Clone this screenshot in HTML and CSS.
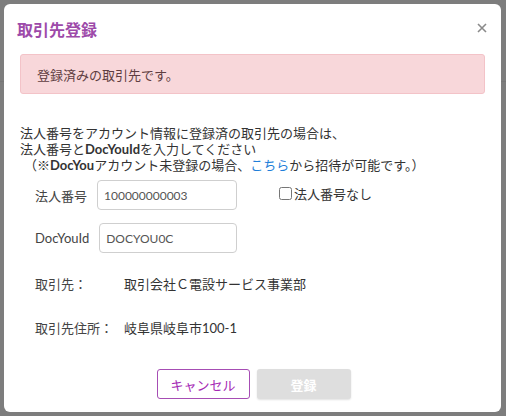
FILE: index.html
```html
<!DOCTYPE html>
<html lang="ja">
<head>
<meta charset="utf-8">
<title>取引先登録</title>
<link rel="stylesheet" href="styles.css">
</head>
<body>
<div class="backdrop-line"></div>
<div class="modal">
  <div class="header">
    <h1 class="title">取引先登録</h1>
    <button class="close" type="button" aria-label="close">
      <svg width="10" height="10" viewBox="0 0 10 10"><path d="M1 1L9 9M9 1L1 9" stroke="#8a8a8a" stroke-width="1.6" fill="none"/></svg>
    </button>
  </div>
  <div class="alert">登録済みの取引先です。</div>
  <p class="intro">法人番号をアカウント情報に登録済の取引先の場合は、<br>法人番号と<b>DocYouId</b>を入力してください<br><span class="paren">（</span>※<b>DocYou</b>アカウント未登録の場合、<a class="link" href="#">こちら</a>から招待が可能です。）</p>
  <div class="form">
    <div class="row">
      <label class="lbl">法人番号</label>
      <input class="field field-wide" type="text" value="100000000003">
      <label class="check"><input class="box" type="checkbox">法人番号なし</label>
    </div>
    <div class="row">
      <label class="lbl">DocYouId</label>
      <input class="field" type="text" value="DOCYOU0C">
    </div>
    <div class="row info first-info"><span class="key">取引先：</span><span class="val">取引会社Ｃ電設サービス事業部</span></div>
    <div class="row info"><span class="key">取引先住所：</span><span class="val">岐阜県岐阜市100-1</span></div>
  </div>
  <div class="actions">
    <button class="btn cancel" type="button">キャンセル</button>
    <button class="btn submit" type="button">登録</button>
  </div>
</div>
</body>
</html>
```
FILE: styles.css
```css
html, body {
  margin: 0;
  padding: 0;
}
body {
  background: #7d7d7d;
  font-family: Lato, "Noto Sans CJK JP", sans-serif;
  color: #333;
  font-size: 13px;
  width: 506px;
  height: 416px;
  overflow: hidden;
  padding: 4px 0 0 4px;
  box-sizing: border-box;
  position: relative;
}
.backdrop-line {
  position: absolute;
  left: 0;
  top: 81px;
  width: 506px;
  height: 1px;
  background: #767676;
}
.modal {
  position: relative;
  width: 497px;
  height: 408px;
  background: #fff;
  border-radius: 6px;
  display: flex;
  flex-direction: column;
  box-sizing: border-box;
}
.header {
  height: 50px;
  padding: 0 13px 0 13px;
  display: flex;
  align-items: center;
  justify-content: space-between;
  box-sizing: border-box;
}
.title {
  margin: 0;
  font-size: 16px;
  font-weight: 700;
  color: #9d4aa9;
  line-height: 20px;
  padding-top: 1px;
}
.close {
  border: 0;
  background: none;
  padding: 0;
  width: 10px;
  height: 10px;
  margin-right: 1px;
  margin-top: -2px;
  display: flex;
}
.alert {
  margin: 0 16px;
  height: 40px;
  box-sizing: border-box;
  background: #f8d7da;
  border: 1px solid #f3c3c8;
  border-radius: 3px;
  padding: 0 16px;
  display: flex;
  align-items: center;
  color: #5e3d41;
  font-size: 13px;
}
.intro {
  margin: 31px 16px 0 16px;
  line-height: 16px;
  font-size: 13px;
  color: #333;
}
.intro b {
  font-weight: 700;
}
.paren {
  padding-left: 4px;
}
.link {
  color: #1f7fd9;
  text-decoration: none;
}
.form {
  margin: 7px 0 0 31px;
  display: flex;
  flex-direction: column;
}
.row {
  display: flex;
  align-items: center;
  height: 30px;
}
.row + .row {
  margin-top: 13px;
}
.row.first-info {
  margin-top: 15px;
}
.row.info + .row.info {
  margin-top: 14px;
}
.lbl {
  margin-right: 10px;
  color: #444;
}
.field {
  width: 138px;
  height: 30px;
  box-sizing: border-box;
  border: 1px solid #cfcfcf;
  border-radius: 4px;
  padding: 0 6px;
  font-family: Lato, "Noto Sans CJK JP", sans-serif;
  font-size: 12px;
  color: #555;
  margin: 0;
}
.field-wide {
  width: 140px;
}
.check {
  margin-left: 42px;
  display: flex;
  align-items: center;
  color: #333;
  margin-top: -3px;
}
.box {
  margin: 0 2px 0 0;
  width: 13px;
  height: 13px;
}
.key {
  width: 89px;
  color: #444;
}
.val {
  color: #333;
}
.actions {
  margin-top: 27px;
  display: flex;
  justify-content: center;
  gap: 7px;
  padding-left: 2px;
}
.btn {
  height: 30px;
  box-sizing: border-box;
  border-radius: 3px;
  font-family: Lato, "Noto Sans CJK JP", sans-serif;
  font-size: 13px;
  padding: 0;
}
.cancel {
  width: 93px;
  background: #fff;
  border: 1px solid #a64db4;
  color: #a52ab5;
}
.submit {
  width: 94px;
  background: #dedede;
  border: 0;
  color: #fff;
  font-weight: 700;
  box-shadow: 0 1px 2px rgba(0,0,0,0.12);
}
```
